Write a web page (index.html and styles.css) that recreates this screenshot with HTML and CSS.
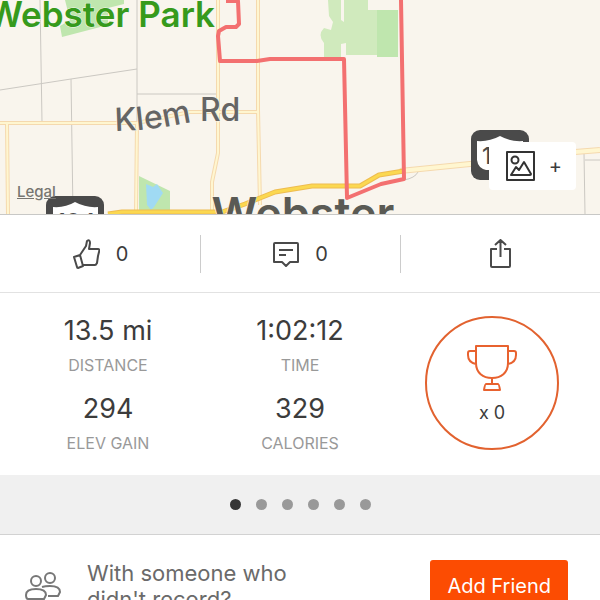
FILE: index.html
```html
<!DOCTYPE html>
<html lang="en">
<head>
<meta charset="utf-8">
<meta name="viewport" content="width=device-width, initial-scale=1">
<title>Activity</title>
<link rel="stylesheet" href="styles.css">
</head>
<body>
<main class="activity">
  <section class="map" aria-label="Route map">
    <svg class="map-canvas" viewBox="0 0 600 214" preserveAspectRatio="xMidYMid slice">
      <g class="park">
        <path d="M65 0H124V4L108 8V25L62 37L60 26L70 20Z"/>
        <path d="M139 176L170 191V211H139Z"/>
        <path d="M368 10H398V57H377V54H368Z"/>
      </g>
      <path class="park-light" d="M328 0H341V20L344 22V0H368V10H377V55H346V43L341 44V57H324V43Q317 35 324 28L331 30L333 22L329 16Z"/>
      <path class="water" d="M146 184L153 187L157 184L163 193L154 207L151 210L147 205Z"/>
      <g class="lane">
        <path d="M40 0L42 122M0 90L71 79L137 69M71 79L73 214M137 0V122M137 94H217M584 153L585 214M585 160H600M404 180Q415 178 418 172"/>
      </g>
      <g class="road-edge">
        <path d="M0 123H137L190 112H258M7 123L8 214M137 123L136 214M218 0V153L212 182V214M258 0V110L260 205"/>
        <path class="wide" d="M400 171L480 163L575 152L600 150"/>
      </g>
      <g class="road">
        <path d="M0 123H137L190 112H258M7 123L8 214M137 123L136 214M218 0V153L212 182V214M258 0V110L260 205"/>
        <path class="wide" d="M400 171L480 163L575 152L600 150"/>
      </g>
      <path class="highway-edge" d="M108 214L122 212H222L245 204L275 192L312 186H360L379 175L404 171"/>
      <path class="highway" d="M108 214L122 212H222L245 204L275 192L312 186H360L379 175L404 171"/>
      <path class="route" d="M226 1H238L239 24L236 27H226L219 31L218 36L220 61H257L270 59H344L347 198L381 184L404 179L401 0"/>
      <path id="klem-road" class="label-path" d="M115 131L140 130Q168 127 190 122L200 121H260"/>
      <text class="park-label" x="215" y="27" text-anchor="end">Webster Park</text>
      <text class="road-label"><textPath href="#klem-road">Klem Rd</textPath></text>
      <text class="town-label" x="303" y="230" text-anchor="middle">Webster</text>
      <g>
        <rect class="shield-plate" x="46" y="196" width="58" height="50" rx="9"/>
        <path class="shield" d="M53 207Q65 208 75 202Q86 208 98 207V240H53Z"/>
        <text class="shield-label" x="76" y="230" text-anchor="middle">104</text>
        <rect class="shield-plate" x="471" y="130" width="58" height="50" rx="9"/>
        <path class="shield" d="M477 141Q489 142 500 136Q511 142 523 141V170H486Q478 168 477 160Z"/>
        <text class="shield-label" x="482" y="164">104</text>
      </g>
    </svg>
    <a class="legal" href="#legal">Legal</a>
    <button class="add-photo" type="button" aria-label="Add photo">
      <svg width="30" height="30" viewBox="0 0 30 30">
        <rect x="1" y="1" width="27" height="28"/>
        <circle cx="9" cy="9" r="3.5"/>
        <path d="M5 24L10 16L13 19L18 11L25 23Q25 24 24 24Z"/>
      </svg>
      <span>+</span>
    </button>
  </section>

  <nav class="actions" aria-label="Activity actions">
    <button class="action" type="button" aria-label="Kudos 0">
      <svg width="28" height="30" viewBox="0 0 28 30">
        <path d="M2 18L8 16L11 27L6 29Q5 29 5 28ZM8 16L14 7L15 2Q18 0 18 4L17 10H26Q28 10 27 13L26 17L25 24Q24 26 23 26H11"/>
      </svg>
      <span>0</span>
    </button>
    <button class="action" type="button" aria-label="Comments 0">
      <svg width="26" height="26" viewBox="0 0 26 26">
        <path d="M2 2H24Q25 2 25 3V21H17L13 25L9 21H1V3Q1 2 2 2ZM6 9H20M6 14H13"/>
      </svg>
      <span>0</span>
    </button>
    <button class="action" type="button" aria-label="Share">
      <svg width="22" height="30" viewBox="0 0 22 30">
        <path d="M7 10H1V27Q1 28 2 28H19Q20 28 20 27V10H14M10.500 18V1M5 6L10.500 1L16 6"/>
      </svg>
    </button>
  </nav>

  <section class="summary" aria-label="Summary">
    <dl class="stats">
      <div class="stat"><dd>13.5 mi</dd><dt>DISTANCE</dt></div>
      <div class="stat"><dd>1:02:12</dd><dt>TIME</dt></div>
      <div class="stat"><dd>294</dd><dt>ELEV GAIN</dt></div>
      <div class="stat"><dd>329</dd><dt>CALORIES</dt></div>
    </dl>
    <div class="trophies">
      <svg width="50" height="46" viewBox="0 0 50 46">
        <path d="M9 1H41V18C41 28 34 33 25 33S9 28 9 18ZM9 6H3Q1 6 1 8V10C1 16 4 18 9 19M41 6H47Q49 6 49 8V10C49 16 46 18 41 19M25 33V39M19 39H31Q32 39 33 45H17Q18 39 19 39Z"/>
      </svg>
      <span>x 0</span>
    </div>
  </section>

  <div class="pager">
    <span class="dot dot-current"></span>
    <span class="dot"></span>
    <span class="dot"></span>
    <span class="dot"></span>
    <span class="dot"></span>
    <span class="dot"></span>
  </div>

  <section class="invite">
    <svg width="36" height="30" viewBox="0 0 36 30">
      <circle cx="11" cy="10" r="5"/>
      <circle cx="25" cy="7" r="5"/>
      <path d="M3 28Q1 28 1 24Q1 18 11 18T21 24L19 28ZM17 16Q20 15 25 15Q35 15 35 21L33 25H23"/>
    </svg>
    <p>With someone who didn't record?</p>
    <button class="add-friend" type="button">Add Friend</button>
  </section>
</main>
</body>
</html>
```

FILE: styles.css
```css
* {
  box-sizing: border-box;
}

body {
  margin: 0;
  background: #fff;
  color: #3c3c3c;
  font-family: Inter, "Liberation Sans", sans-serif;
}

button {
  margin: 0;
  padding: 0;
  border: 0;
  background: none;
  color: inherit;
  font: inherit;
}

svg {
  display: block;
  flex: none;
  fill: none;
  stroke-linejoin: round;
}

.activity {
  height: 100vh;
  overflow: hidden;
}

/* Map */

.map {
  position: relative;
  height: 215px;
  border-bottom: 1px solid #c8c8c6;
  background: #f9f5ed;
}

.map-canvas {
  width: 100%;
  height: 100%;
}

.park { fill: #bfe6ae; }
.park-light { fill: #d0eabd; }
.water { fill: #a0daf3; }
.lane { stroke: #cbc8c2; stroke-width: 1; }
.road-edge { stroke: #f5d9ae; stroke-width: 4; }
.road-edge .wide { stroke-width: 6; }
.road { stroke: #fff6d0; stroke-width: 2; }
.road .wide { stroke-width: 4; }
.highway-edge { stroke: #eebc50; stroke-width: 5; }
.highway { stroke: #fbd850; stroke-width: 3; }
.route { stroke: #f37070; stroke-width: 4; }
.label-path { stroke: none; }

.map text {
  paint-order: stroke;
  stroke: #f9f5ed;
  stroke-width: 1px;
}

.map .park-label {
  fill: #369a1c;
  font-size: 35px;
  font-weight: 600;
}

.map .road-label {
  fill: #656565;
  font-size: 32px;
  font-weight: 500;
}

.map .town-label {
  fill: #5a5a54;
  font-size: 45px;
  font-weight: 600;
}

.shield-plate { fill: #4a4a4a; }
.shield { fill: #fff; }

.map .shield-label {
  fill: #4a4a4a;
  stroke: none;
  font-size: 23px;
  font-weight: 500;
}

.legal {
  position: absolute;
  bottom: 13px;
  left: 17px;
  color: #777571;
  font-size: 15px;
  font-weight: 500;
  line-height: 18px;
}

.add-photo {
  position: absolute;
  right: 24px;
  bottom: 24px;
  display: flex;
  align-items: center;
  gap: 13px;
  height: 48px;
  padding: 0 14px 0 17px;
  border-radius: 4px;
  background: #fff;
  font-size: 20px;
  line-height: 24px;
}

.add-photo svg {
  stroke: #333;
  stroke-width: 2;
}

/* Action bar */

.actions {
  display: grid;
  grid-template-columns: repeat(3, 1fr);
  align-items: center;
  height: 78px;
  border-bottom: 1px solid #e2e2e2;
}

.action {
  display: flex;
  align-items: center;
  justify-content: center;
  gap: 16px;
  height: 38px;
  font-size: 20px;
}

.action + .action {
  border-left: 1px solid #ccc;
}

.action svg {
  stroke: #4a4a4a;
  stroke-width: 2;
}

/* Summary */

.summary {
  display: grid;
  grid-template-columns: 2fr 1fr;
  align-items: center;
  padding: 20px 12px 22px;
}

.stats {
  display: grid;
  grid-template-columns: 1fr 1fr;
  row-gap: 16px;
  margin: 0;
}

.stat {
  display: flex;
  flex-direction: column;
  gap: 6px;
  text-align: center;
}

.stat dd {
  margin: 0;
  font-size: 27px;
  line-height: 36px;
}

.stat dt {
  color: #999;
  font-size: 16px;
  line-height: 20px;
}

.trophies {
  display: flex;
  flex-direction: column;
  align-items: center;
  justify-content: center;
  gap: 10px;
  justify-self: center;
  width: 134px;
  height: 134px;
  padding-top: 4px;
  border: 2px solid #e2622f;
  border-radius: 50%;
  font-size: 18px;
  line-height: 24px;
}

.trophies svg {
  stroke: #e8622f;
  stroke-width: 2;
}

/* Page dots */

.pager {
  display: flex;
  align-items: center;
  justify-content: center;
  gap: 15px;
  height: 60px;
  border-bottom: 1px solid #d2d2d2;
  background: #f0f0f0;
}

.dot {
  width: 11px;
  height: 11px;
  border-radius: 50%;
  background: #999;
}

.dot-current {
  background: #363636;
}

/* Invite row */

.invite {
  display: flex;
  align-items: center;
  padding: 25px 32px 24px 25px;
  color: #6a6a6a;
}

.invite svg {
  stroke: #777;
  stroke-width: 2;
}

.invite p {
  width: 240px;
  margin: 0 auto 0 26px;
  font-size: 22px;
  line-height: 26px;
}

.add-friend {
  height: 52px;
  padding: 0 17px;
  border-radius: 3px;
  background: #fc4c02;
  color: #fff;
  font-size: 20px;
}
```
